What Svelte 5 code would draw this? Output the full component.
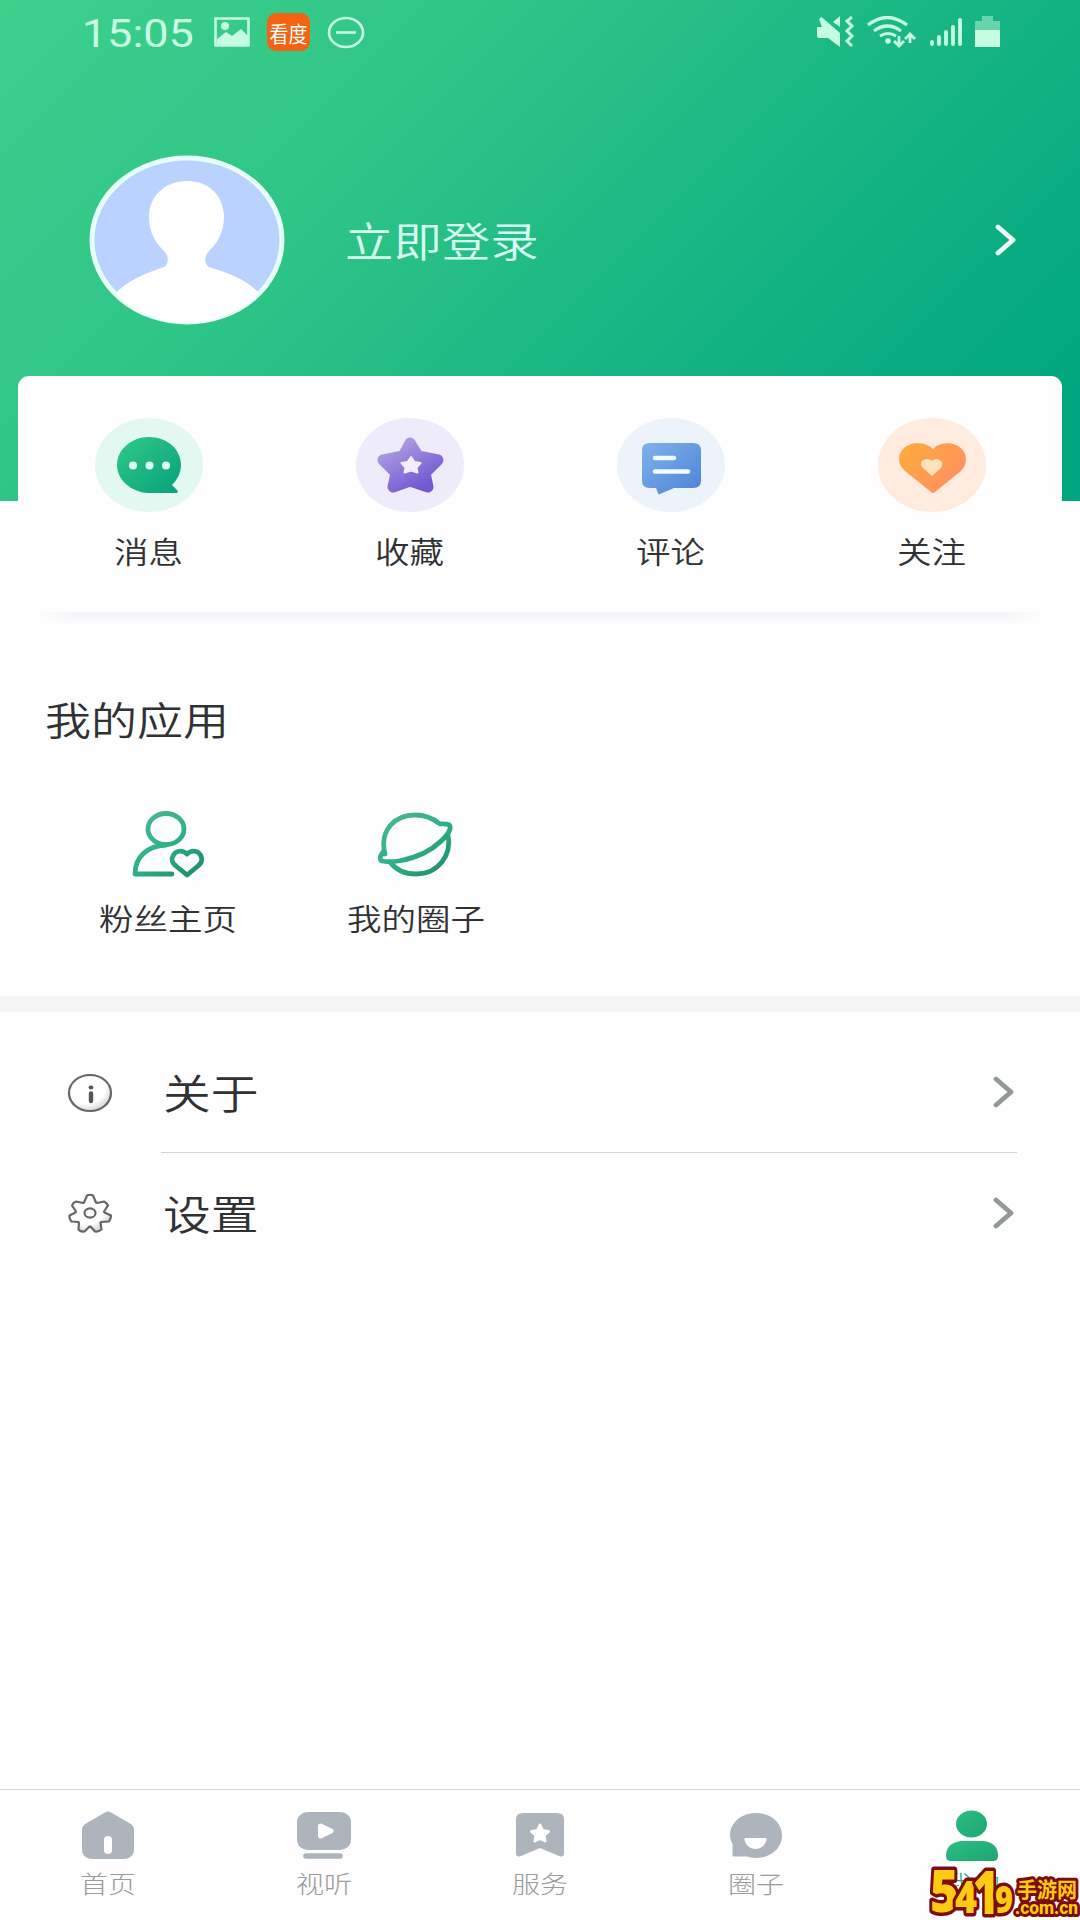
<script lang="ts">
	type Item = { id: string; label: string };

	const shortcuts: Item[] = [
		{ id: 'message', label: '消息' },
		{ id: 'favorite', label: '收藏' },
		{ id: 'comment', label: '评论' },
		{ id: 'follow', label: '关注' }
	];

	const apps: Item[] = [
		{ id: 'fans', label: '粉丝主页' },
		{ id: 'circle', label: '我的圈子' }
	];

	const settings: Item[] = [
		{ id: 'about', label: '关于' },
		{ id: 'settings', label: '设置' }
	];

	const tabs: Item[] = [
		{ id: 'home', label: '首页' },
		{ id: 'video', label: '视听' },
		{ id: 'service', label: '服务' },
		{ id: 'circle', label: '圈子' },
		{ id: 'mine', label: '我的' }
	];

	let active = $state('mine');
</script>

{#snippet chevron()}
	<svg class="chevron" width="24" height="36" viewBox="0 0 24 36">
		<path d="M3 5 18 18 3 31" fill="none" stroke="currentColor" stroke-width="4.8" stroke-linecap="round" stroke-linejoin="round" />
	</svg>
{/snippet}

<div class="page">
	<header class="hero">
		<div class="status">
			<span class="clock wide">15:05</span>
			<svg class="picture" width="36" height="30" viewBox="0 0 36 30">
				<path d="M1.5 1.5h33v27h-33z" fill="none" stroke="currentColor" stroke-width="2.6" />
				<circle cx="11" cy="9" r="4" fill="currentColor" />
				<path d="M3 22 12 15l6 4 9-7 8 8v8H3z" fill="currentColor" />
			</svg>
			<span class="app-badge"><span>看度</span></span>
			<svg class="dnd" width="38" height="33" viewBox="0 0 38 33">
				<ellipse cx="19" cy="16.5" rx="17" ry="14.5" fill="none" stroke="currentColor" stroke-width="2.6" />
				<path d="M9 16.5h20" stroke="currentColor" stroke-width="2.6" />
			</svg>
			<div class="status-right">
				<svg width="38" height="32" viewBox="0 0 38 32" fill="currentColor">
					<path d="M0 11h5L2 3l2.500-2L23 17v14L11 22H2q-2 0-2-2zM16 6l7-6v11z" />
					<path d="m35 1-5 4 5 5-5 5 5 5-5 5 5 5" fill="none" stroke="currentColor" stroke-width="3" />
				</svg>
				<svg width="50" height="33" viewBox="0 0 50 33" fill="none" stroke="currentColor" stroke-width="3.2">
					<path d="M1 9q19-15 39 0M7 15q13-10 27 0M13 20q8-5 16 0" />
					<circle cx="21" cy="25" r="2.8" fill="currentColor" stroke="none" />
					<path d="M32 20v10m-5-5 5 5 5-5M43 27V18m-5 5 5-5 5 5" stroke-width="2.8" />
				</svg>
				<svg width="34" height="30" viewBox="0 0 34 30" stroke="currentColor" stroke-width="3.8" stroke-linecap="round">
					<path d="M3 25v2M10 20v7M17 15v12M24 10v17M31 3v24" />
				</svg>
				<svg width="26" height="32" viewBox="0 0 26 32" fill="currentColor">
					<path d="M0 5h7V0h11v5h7v10H0z" opacity=".45" />
					<path d="M0 14h25v17H0z" />
				</svg>
			</div>
		</div>

		<div class="profile">
			<svg class="avatar" width="197" height="171" viewBox="0 0 197 171">
				<defs>
					<clipPath id="avatar-clip"><ellipse cx="98" cy="85" rx="96" ry="83" /></clipPath>
				</defs>
				<ellipse cx="98" cy="85" rx="95" ry="82" fill="#b9d2ff" stroke="#e6fff8" stroke-width="5" />
				<path
					d="M98 26c23 0 37 16 37 36 0 17-8 27-15 34-5 5-5 13 0 16 19 6 38 12 53 29v35H24v-35c15-17 34-23 51-29 5-3 5-11 0-16-7-7-15-17-15-34 0-20 15-36 38-36z"
					fill="#fff"
					clip-path="url(#avatar-clip)"
				/>
			</svg>
			<span class="login wide-left">立即登录</span>
			{@render chevron()}
		</div>
	</header>

	<section class="card">
		{#each shortcuts as item}
			<div class="shortcut">
				<svg width="108" height="94" viewBox="0 0 108 94">
					{#if item.id === 'message'}
						<defs>
							<linearGradient id="g-msg" x1="0" y1="0" x2="1" y2="1"><stop stop-color="#30ca87" /><stop offset="1" stop-color="#08a07c" /></linearGradient>
						</defs>
						<ellipse cx="54" cy="47" rx="54" ry="47" fill="#e3f8f0" />
						<path d="M54 19c18 0 32 12 32 28 0 8-4 15-9 20l5 5q2 3-1 3H53C36 74 22 62 22 47s14-28 32-28z" fill="url(#g-msg)" />
						<g fill="#defff4"><circle cx="38" cy="47.5" r="4" /><circle cx="54.5" cy="47.5" r="4" /><circle cx="71" cy="47.5" r="4" /></g>
					{:else if item.id === 'favorite'}
						<defs>
							<linearGradient id="g-fav" x1="0" y1="0" x2=".7" y2="1"><stop stop-color="#b5a5e3" /><stop offset="1" stop-color="#7159d2" /></linearGradient>
						</defs>
						<ellipse cx="54" cy="47" rx="54" ry="47" fill="#eeebfa" />
						<path d="m54 25 8 13 20 4-13 13 3 14-18-6-17 6 3-14-13-13 20-4z" fill="url(#g-fav)" stroke="url(#g-fav)" stroke-width="11" stroke-linejoin="round" />
						<path d="m55 39 3.500 5 6 1-4 4.500 1 5-6.500-2-6.500 2 1-5-4-4.500 6-1z" fill="#f4efff" stroke="#f4efff" stroke-width="2" stroke-linejoin="round" />
					{:else if item.id === 'comment'}
						<defs>
							<linearGradient id="g-com" x1="0" y1="0" x2="1" y2="1"><stop stop-color="#7eb2ec" /><stop offset="1" stop-color="#4c83d7" /></linearGradient>
						</defs>
						<ellipse cx="54" cy="47" rx="54" ry="47" fill="#edf3fa" />
						<path d="M33 25h43q8 0 8 7v31q0 7-8 7H57l-14 6q-2 1-2-1l-2-5h-6q-8 0-8-7V32q0-7 8-7z" fill="url(#g-com)" />
						<path d="M38 40h19M38 53.500h33" stroke="#f1faff" stroke-width="4.600" stroke-linecap="round" />
					{:else}
						<defs>
							<linearGradient id="g-fol" x1="0" y1="0" x2="1" y2=".7"><stop stop-color="#ffac3b" /><stop offset="1" stop-color="#ff8f60" /></linearGradient>
						</defs>
						<ellipse cx="54" cy="47" rx="54" ry="47" fill="#ffecdf" />
						<path d="M55 31c8-8 22-7 29 0 6 7 5 16-1 22L57 74q-2 2-4 0L27 53c-7-6-8-15-2-22 7-7 21-8 30 0z" fill="url(#g-fol)" />
						<path d="M54 43c3-3 7-2 9 0s1 6 0 7l-9 8-9-8c-2-2-3-5-1-7s7-3 10 0z" fill="#ffe1bd" />
					{/if}
				</svg>
				<span class="wide">{item.label}</span>
			</div>
		{/each}
	</section>

	<section class="apps">
		<h2><span class="wide-left">我的应用</span></h2>
		<div class="app-grid">
			{#each apps as app}
				<div class="app">
					<svg width="76" height="70" viewBox="0 0 76 70">
						<defs>
							<linearGradient id="g-{app.id}" gradientUnits="userSpaceOnUse" x1="10" y1="0" x2="60" y2="66"><stop stop-color="#4eb58d" /><stop offset=".5" stop-color="#2fb386" /><stop offset="1" stop-color="#1f9068" /></linearGradient>
						</defs>
						<g fill="none" stroke="url(#g-{app.id})" stroke-width="4.8" stroke-linecap="round" stroke-linejoin="round">
							{#if app.id === 'fans'}
								<ellipse cx="36" cy="18" rx="18" ry="15.5" />
								<path d="M36 34C17 35 5 46 5 63h37" />
								<path d="M57 43c5-5 12-3 14 2s0 7-3 10L57 64 46 55c-4-3-5-7-3-10 2-5 9-7 14-2z" />
							{:else}
								<path d="M7 43C1 19 17 4 37 4c11 0 19 4 25 9 6 0 11-1 10 5C70 25 58 36 46 42 29 50 13 52 4 50c-3-1-2-5 1-9" />
								<path d="M70 24c4 19-9 39-32 39-12 0-20-4-26-12" />
							{/if}
						</g>
					</svg>
					<span class="wide">{app.label}</span>
				</div>
			{/each}
		</div>
	</section>

	<section class="list">
		{#each settings as row}
			<div class="row">
				<svg class="row-icon" width="46" height="40" viewBox="0 0 46 40">
					<defs>
						<radialGradient id="g-{row.id}" cx=".4" cy=".35" r=".65"><stop offset=".7" stop-color="#fff" /><stop offset="1" stop-color="#d8d8d8" /></radialGradient>
					</defs>
					{#if row.id === 'about'}
						<ellipse cx="23" cy="20" rx="21" ry="18" fill="url(#g-about)" stroke="#666" stroke-width="2.2" />
						<ellipse cx="24" cy="14.5" rx="2.4" ry="2" fill="#555" />
						<path d="M24 20.500v7.500" stroke="#555" stroke-width="4.4" stroke-linecap="round" />
					{:else}
						<path
							d="M20 2.500q3-1.500 6 0l3 7 1 .5 7-1.500q3 1.500 4 4l-4 6 .5 1 6.500 3q0 3-2 6l-8 .5-.5 1 1 6.500q-3 2.500-6.500 2l-4.500-5h-1l-5 5q-4 .5-6-2l.5-6.500-.5-1-7-.5q-2.500-3-2-6l6-3 .5-1-4-6q1-3 4-4l7 1.500 1-.5z"
							fill="url(#g-settings)"
							stroke="#666"
							stroke-width="2.2"
							stroke-linejoin="round"
						/>
						<ellipse cx="23" cy="20" rx="5.5" ry="4.6" fill="#fff" stroke="#666" stroke-width="2.2" />
					{/if}
				</svg>
				<div class="row-body">
					<span class="wide-left">{row.label}</span>
					{@render chevron()}
				</div>
			</div>
		{/each}
	</section>

	<nav class="tabs">
		{#each tabs as tab}
			<button class="tab" class:active={active === tab.id} onclick={() => (active = tab.id)}>
				<svg width="56" height="52" viewBox="0 0 56 52" fill="currentColor">
					{#if tab.id === 'home'}
						<path d="M25 2.500q3-2 6 0l19 11q4 2.500 4 6V39q0 10-12 10H14Q2 49 2 39V19.500Q2 16 6 13.500z" />
						<path d="M28 30v10" stroke="#fff" stroke-width="8" stroke-linecap="round" />
					{:else if tab.id === 'video'}
						<rect x="1" y="2" width="54" height="38" rx="11" ry="10" />
						<path d="m24.500 16 10.500 5-10.500 5z" fill="#fff" stroke="#fff" stroke-width="5" stroke-linejoin="round" />
						<path d="M10 46h34" stroke="currentColor" stroke-width="5.600" stroke-linecap="round" />
					{:else if tab.id === 'service'}
						<path d="M11 3h34q7 0 7 6v34q0 5-5 3L28 38 9 46q-5 2-5-3V9q0-6 7-6z" />
						<path d="m28 15 2.500 5.500 6 1-4.500 4 1 5.500-5-2.500-5 2.500 1-5.500-4.500-4 6-1z" fill="#fff" stroke="#fff" stroke-width="3" stroke-linejoin="round" />
					{:else if tab.id === 'circle'}
						<path d="M28 3c15 0 26 10 26 22.500S43 48 28 48q-4 0-9-1.500H5q-.5 0-.5-1V34Q2 30 2 25.500C2 13 13 3 28 3z" />
						<path d="M18 28h19q2 0 1.500 2c-3 12-19 12-22 0q-.5-2 1.500-2z" fill="#fff" />
					{:else}
						<defs>
							<linearGradient id="g-mine" x1="0" y1="0" x2="1" y2="1"><stop stop-color="#2abf83" /><stop offset="1" stop-color="#1da574" /></linearGradient>
						</defs>
						<ellipse cx="27.500" cy="14" rx="15.500" ry="13.500" fill="url(#g-mine)" />
						<path d="M17 31h23q14 2 14 15 0 5-5 5H7q-5 0-5-5 0-13 15-15z" fill="url(#g-mine)" />
					{/if}
				</svg>
				<span class="wide">{tab.label}</span>
			</button>
		{/each}
	</nav>

	<svg class="watermark" width="152" height="56" viewBox="0 0 152 56">
		<g class="mark-big">
			<text x="2" y="48" font-size="58" textLength="29" lengthAdjust="spacingAndGlyphs">5</text>
			<text x="27" y="49" font-size="44" textLength="22" lengthAdjust="spacingAndGlyphs">4</text>
			<text x="45" y="50" font-size="60" textLength="26" lengthAdjust="spacingAndGlyphs">1</text>
			<text x="67" y="49" font-size="37" textLength="18" lengthAdjust="spacingAndGlyphs">9</text>
		</g>
		<text class="mark-cn" x="89" y="33" textLength="60" lengthAdjust="spacingAndGlyphs">手游网</text>
		<text class="mark-url" x="87" y="50" textLength="63" lengthAdjust="spacingAndGlyphs">.com.cn</text>
	</svg>
</div>

<style>
	:global(body) {
		background: #fdfdfd;
	}

	.page {
		position: relative;
		display: flex;
		flex-direction: column;
		width: 1080px;
		height: 1920px;
		overflow: hidden;
		background: #fefefe;
		color: #303133;
		font-family: 'Noto Sans CJK SC', sans-serif;
		font-weight: 350;
	}

	svg {
		display: block;
		flex-shrink: 0;
	}

	.wide {
		display: inline-block;
		transform: scaleX(1.17);
		white-space: nowrap;
	}

	.wide-left {
		display: inline-block;
		transform: scaleX(1.18);
		transform-origin: left center;
		white-space: nowrap;
	}

	.hero {
		flex: none;
		height: 501px;
		box-sizing: border-box;
		background: linear-gradient(135deg, #3dd08d 0%, #2fc587 32%, #10b083 72%, #00a67f 93%);
		color: #c5fce2;
	}

	.status {
		display: flex;
		align-items: center;
		height: 64px;
		padding: 0 79px 0 90px;
	}

	.clock {
		width: 97px;
		padding-top: 2px;
		font-family: Roboto, sans-serif;
		font-size: 38.5px;
		font-weight: 400;
	}

	.picture {
		margin-left: 27px;
	}

	.app-badge {
		display: flex;
		align-items: center;
		justify-content: center;
		width: 43px;
		height: 38px;
		margin: 0 17px 0 17px;
		border-radius: 9px;
		background: #f26413;
		color: #fff;
		font: 400 19px 'Noto Sans CJK SC', sans-serif;
	}

	.app-badge span {
		white-space: nowrap;
		transform: scaleY(1.15);
	}

	.status-right {
		display: flex;
		align-items: center;
		gap: 12px;
		margin-left: auto;
	}

	.profile {
		display: flex;
		align-items: center;
		padding: 91px 61px 0 89px;
	}

	.login {
		margin-top: -4px;
		margin-left: 59px;
		font-size: 41px;
		color: #d6fff1;
	}

	.chevron {
		margin-left: auto;
	}

	.profile .chevron {
		margin-top: -2px;
		color: #edfff8;
	}

	.card {
		position: relative;
		display: grid;
		grid-template-columns: repeat(4, 1fr);
		flex: none;
		height: 237px;
		margin: -125px 18px 0;
		border-radius: 11px 11px 0 0;
		background: #fefefe;
	}

	.card::after {
		content: '';
		position: absolute;
		left: 18px;
		right: 18px;
		top: 236px;
		height: 14px;
		background: linear-gradient(90deg, #fefefe, transparent 4%, transparent 96%, #fefefe), linear-gradient(#f3f3f9, #fefefe);
	}

	.shortcut {
		display: flex;
		flex-direction: column;
		align-items: center;
		padding-top: 42px;
		font-size: 29.5px;
		line-height: 40px;
	}

	.shortcut span {
		margin-top: 18px;
	}

	.apps {
		flex: none;
		height: 399px;
		box-sizing: border-box;
		padding: 75px 45px 0;
		border-bottom: 16px solid #f6f6f8;
	}

	h2 {
		margin: 0;
		font-size: 39px;
		font-weight: 350;
		line-height: 60px;
	}

	.app-grid {
		display: flex;
		margin-top: 63px;
		margin-left: -1px;
	}

	.app {
		display: flex;
		flex-direction: column;
		align-items: center;
		width: 248px;
		font-size: 29.5px;
		line-height: 40px;
	}

	.app span {
		margin-top: 16px;
	}

	.list {
		flex: none;
		padding-top: 20px;
	}

	.row {
		display: flex;
		align-items: center;
		padding: 0 63px 0 67px;
	}

	.row-body {
		display: flex;
		flex: 1;
		align-items: center;
		height: 120px;
		margin-left: 48px;
		padding-left: 2px;
		border-bottom: 1px solid #d4d4d4;
		font-size: 40.5px;
	}

	.row-body span {
		margin-top: -2px;
	}

	.row:last-child .row-body {
		border-bottom: none;
	}

	.row-body .chevron {
		color: #929895;
	}

	.tabs {
		display: flex;
		flex: none;
		height: 131px;
		box-sizing: border-box;
		margin-top: auto;
		border-top: 1px solid #d5d5d5;
	}

	.tab {
		display: flex;
		flex: 1;
		flex-direction: column;
		align-items: center;
		padding: 20px 0 0;
		border: none;
		background: none;
		color: #adb4bb;
		font: inherit;
		font-size: 24px;
		font-weight: 300;
		line-height: 36px;
		cursor: pointer;
	}

	.tab span {
		margin-top: 3px;
		color: #9b9b9b;
	}

	.tab.active span {
		color: #2aa587;
	}

	.watermark {
		position: absolute;
		right: 0;
		bottom: 0;
	}

	.watermark text {
		fill: #ffca12;
		stroke: #7c0c08;
		stroke-linejoin: round;
		paint-order: stroke;
	}

	.mark-big {
		font-family: 'Open Sans', sans-serif;
		font-weight: 800;
	}

	.mark-big text {
		stroke-width: 7px;
	}

	.mark-cn {
		font: 700 21px 'Noto Sans CJK SC', sans-serif;
		stroke-width: 6px;
	}

	.mark-url {
		font: 800 18px Roboto, sans-serif;
		stroke-width: 6px;
	}
</style>
